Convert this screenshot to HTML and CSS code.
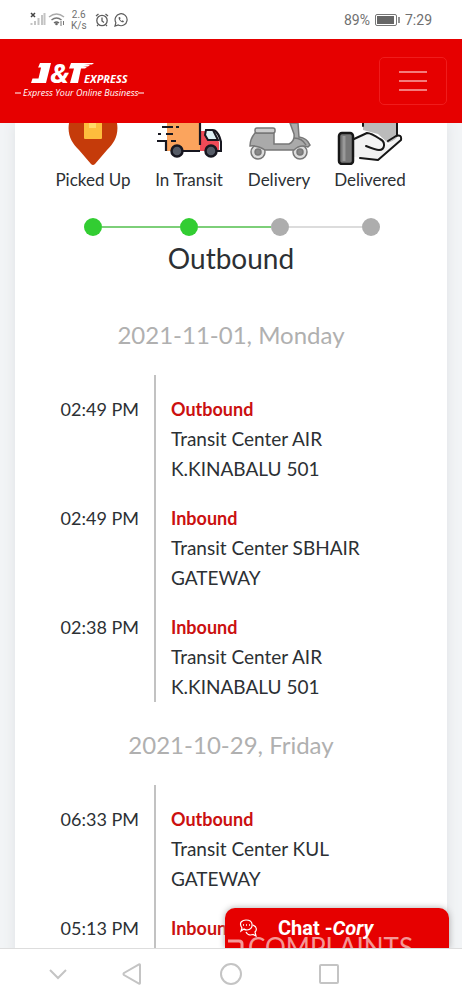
FILE: index.html
```html
<!DOCTYPE html>
<html lang="en">
<head>
<meta charset="utf-8">
<meta name="viewport" content="width=device-width, initial-scale=1">
<title>J&amp;T Express tracking</title>
<link rel="stylesheet" href="styles.css">
</head>
<body>
<div class="status-bar">
  <div class="status-left">
    <svg width="36" height="16" viewBox="0 0 36 16" aria-hidden="true">
      <path d="M1 1l4 4M5 1l-4 4" stroke="#444" stroke-width="1.5"/>
      <path d="M1.500 13v-2M5 13V9M8.500 13V6M12 13V3M14.500 13V1" stroke="#c4c4c4" stroke-width="2"/>
      <g fill="none" stroke="#aaa" stroke-width="1.500"><path d="M19 5q7.500-6 15 0"/><path d="M21.500 8q5-4 10 0" stroke="#777"/><path d="M24 11q2.500-2 5 0" stroke="#666"/></g>
      <circle cx="26.500" cy="12" r="1.300" fill="#666"/><path d="M31 9v5M33.500 9v4" stroke="#777"/>
    </svg>
    <span class="net-speed">2.6<br>K/s</span>
    <svg class="alarm" width="14" height="14" viewBox="0 0 14 14" fill="none" stroke="#5c5c5c" stroke-width="1.300" aria-hidden="true"><circle cx="7" cy="7.500" r="5.200"/><path d="M1 3l2.500-2M13 3l-2.500-2M7 4.500V8l2 1.500M3 12l-1 1M11 12l1 1"/></svg>
    <svg width="14" height="14" viewBox="0 0 14 14" fill="none" stroke="#5c5c5c" stroke-width="1.200" aria-hidden="true"><path d="M1 13l.9-3.300A6 6 0 1 1 4.300 12z"/><path d="M4.700 4.300c-.7 2 2.500 5.500 4.700 5l.6-1.100-1.500-.9-.8.700C6.500 7.400 6 6.500 6 6l.6-.6-.6-1.500z" fill="#5c5c5c" stroke="none"/></svg>
  </div>
  <div class="status-right">
    <span>89%</span>
    <svg width="25" height="12" viewBox="0 0 25 12" aria-hidden="true"><rect x=".5" y=".5" width="21" height="11" rx="1.500" fill="none" stroke="#777"/><rect x="2" y="2" width="17" height="8" fill="#666"/><path d="M24 3v6" stroke="#777" stroke-width="1.600"/></svg>
    <span>7:29</span>
  </div>
</div>

<header class="site-header">
  <a class="brand" href="#" aria-label="J&amp;T Express">
    <svg width="130" height="40" viewBox="0 0 130 40" aria-hidden="true">
      <g class="logo-text" fill="#fff">
        <path d="M25 2h11l-5 20H16l1.500-4.500h6l2.600-11h-3z"/>
        <text class="logo-amp" x="35" y="22">&amp;</text>
        <path d="M56 2h23l-2 1.500h-8l6 .5-2 1.500h-5l4 .5-2 1.500h-4L63 22h-8l4-14.500h-5z"/>
        <text class="logo-express" x="69" y="22">EXPRESS</text>
        <text class="logo-tag" x="8" y="35">Express Your Online Business</text>
      </g>
      <path d="M0 32h6M123 32h6" stroke="#fff"/>
    </svg>
  </a>
  <button class="menu-button" type="button" aria-label="Menu"><span></span><span></span><span></span></button>
</header>

<main class="viewport">
  <section class="card">
    <ol class="steps">
      <li><svg width="60" height="42" viewBox="0 0 60 42" aria-hidden="true"><path d="M6 0h48c2 12-3 20-10 27L32 41q-2 2-4 0L16 27C9 20 4 12 6 0z" fill="#c53b0a"/><path d="M21 0h18v15q0 1-1 1H22q-1 0-1-1z" fill="#fdbd3d"/><path d="M26 0h7v5h-7z" fill="#ffd968"/></svg>Picked Up</li>
      <li><svg width="66" height="42" viewBox="0 0 66 42" aria-hidden="true">
        <path d="M11 0h33v28H11z" fill="#fba45d"/><path d="M44 8h12l7 11v9H44z" fill="#f04a57"/><path d="M50 7h7l5 10H52l-3-5z" fill="#dff0f5" stroke="#171720" stroke-width="2"/>
        <path d="M44 0v22M26 28h18M58 7q5 3 7 12v9h-4M1 18h9v10M6 4h11M20 4h3M2 11h3M10 11h7M15 18h5" fill="none" stroke="#171720" stroke-width="2.200"/>
        <g fill="#555b66" stroke="#171720" stroke-width="2.500"><circle cx="21" cy="28" r="5.500"/><circle cx="55" cy="28" r="5.500"/></g></svg>In Transit</li>
      <li><svg width="64" height="42" viewBox="0 0 64 42" aria-hidden="true">
        <g stroke="#777" stroke-width="1.500"><g fill="#ddd"><circle cx="11" cy="29" r="7"/><circle cx="53" cy="29" r="7"/></g><g fill="#888"><circle cx="11" cy="29" r="3"/><circle cx="53" cy="29" r="3"/></g>
        <path d="M43 0h8l1 14q8 1 11 8l-2 2q-8-3-14 3H18q-7-5-15-4 0-7 5-13h19v11h15q6-3 5-10z" fill="#aaa"/><rect x="8" y="5" width="20" height="5" rx="2" fill="#ccc"/><path d="M47 15q8 0 12 7" fill="none"/></g></svg>Delivery</li>
      <li><svg width="66" height="42" viewBox="0 0 66 42" aria-hidden="true">
        <path d="M26 0h34v16l-9 4-10-9-15-4z" fill="#bbb"/><path d="M17 16l13-6 13 5 6 4 2 3 11-9q4 2 1 6L41 37l-24-3z" fill="#f2f2f2"/>
        <g fill="none" stroke="#171717" stroke-width="2" stroke-linecap="round" stroke-linejoin="round"><path d="M17 16l13-6q4 0 13 6c6 3 5 11-1 11q-3 0-13-4M51 18l8-5q6-2 5 4L41 37l-18-2M26 0v3M60 0v12"/><rect x="2" y="10" width="14" height="31" rx="3" fill="#777" stroke-width="2.500"/></g><path d="M7 13v25" stroke="#999" stroke-width="3"/></svg>Delivered</li>
    </ol>
    <div class="track" aria-hidden="true">
      <i class="dot done"></i><i class="line done first"></i><i class="dot done"></i><i class="line done"></i><i class="dot"></i><i class="line"></i><i class="dot"></i>
    </div>
    <h1>Outbound</h1>

    <h2>2021-11-01, Monday</h2>
    <ul class="events">
      <li><time>02:49 PM</time><div class="event"><strong>Outbound</strong><p>Transit Center AIR<br>K.KINABALU 501</p></div></li>
      <li><time>02:49 PM</time><div class="event"><strong>Inbound</strong><p>Transit Center SBHAIR<br>GATEWAY</p></div></li>
      <li><time>02:38 PM</time><div class="event"><strong>Inbound</strong><p>Transit Center AIR<br>K.KINABALU 501</p></div></li>
    </ul>
    <h2>2021-10-29, Friday</h2>
    <ul class="events ongoing">
      <li><time>06:33 PM</time><div class="event"><strong>Outbound</strong><p>Transit Center KUL<br>GATEWAY</p></div></li>
      <li><time>05:13 PM</time><div class="event"><strong>Inbound</strong></div></li>
    </ul>
  </section>
  <button class="chat" type="button">
    <svg width="18" height="18" viewBox="0 0 18 18" fill="none" stroke="#fff" stroke-width="1.200" aria-hidden="true"><path d="M2 12l1-3C-1 3 4 1 7 1c8 0 8 9 1 10q-2 0-3-1zM14 6c4 2 4 5 2 7l1 4-3-1.500c-3 1-6 0-7-2.500"/><path d="M4 6h1M7 6h1M10 6h1" stroke-width="1.500"/></svg>
    <span>Chat -<em>Cory</em></span>
  </button>
  <div class="watermark"><svg width="16" height="20" viewBox="0 0 16 20" fill="none" stroke="currentColor" stroke-width="3" aria-hidden="true"><path d="M0 4h11q3 0 3 3v13"/></svg><span>COMPLAINTS</span></div>
</main>

<nav class="nav-bar" aria-label="System">
  <button type="button" aria-label="Hide"><svg width="18" height="12" viewBox="0 0 18 12"><path d="M1 2l8 8 8-8"/></svg></button>
  <button type="button" aria-label="Back"><svg width="20" height="22" viewBox="0 0 20 22"><path d="M18 2v18q0 1-1 .5L2 12q-1-1 0-2l15-8.500q1-.5 1 .5z"/></svg></button>
  <button type="button" aria-label="Home"><svg width="22" height="22" viewBox="0 0 22 22"><circle cx="11" cy="11" r="10"/></svg></button>
  <button type="button" aria-label="Recents"><svg width="20" height="20" viewBox="0 0 20 20"><rect x="1" y="1" width="18" height="18" rx="1"/></svg></button>
</nav>
</body>
</html>
```
FILE: styles.css
```css
* { box-sizing: border-box; }
body {
  margin: 0;
  height: 100vh;
  display: flex;
  flex-direction: column;
  overflow: hidden;
  background: #fff;
  color: #2c3034;
  font-family: Lato, "Noto Sans", sans-serif;
}
button { border: 0; background: none; padding: 0; font: inherit; }
ol, ul { list-style: none; margin: 0; padding: 0; }
h1, h2, p { margin: 0; font-weight: 400; }
svg { display: block; }

.status-bar {
  flex: none;
  height: 39px;
  display: flex;
  align-items: center;
  justify-content: space-between;
  padding: 0 30px;
  color: #707070;
  font: 14px Roboto, sans-serif;
}
.status-left, .status-right { display: flex; align-items: center; gap: 5px; }
.net-speed { font-size: 10px; line-height: 11px; text-align: center; }
.alarm { margin-left: 3px; }

.site-header {
  flex: none;
  height: 84px;
  display: flex;
  align-items: center;
  justify-content: space-between;
  padding: 0 15px;
  background: #e60000;
}
.logo-text { font-family: "Open Sans", sans-serif; font-style: italic; font-weight: 700; }
.logo-amp { font-size: 27px; }
.logo-express { font-size: 11px; }
.logo-tag { font-size: 9px; font-weight: 500; }
.menu-button {
  width: 68px;
  height: 48px;
  display: flex;
  flex-direction: column;
  align-items: center;
  justify-content: center;
  gap: 7px;
  border: 1px solid #f01c1c;
  border-radius: 5px;
}
.menu-button span { width: 28px; height: 2px; background: #f47c7c; }

.viewport {
  position: relative;
  flex: 1;
  min-height: 0;
  overflow: hidden;
  padding: 0 15px;
  background: #f2f4f6;
}
.card { background: #fff; min-height: 100%; box-shadow: 0 0 12px #dfe2e5; }
.steps {
  display: grid;
  grid-template-columns: 96fr 96fr 84fr 98fr;
  padding: 0 28px 0 30px;
  font-size: 17px;
  line-height: 30px;
}
.steps li { display: flex; flex-direction: column; align-items: center; white-space: nowrap; }
.track { display: flex; align-items: center; padding: 23px 67px 0 69px; }
.dot { flex: none; width: 18px; height: 18px; border-radius: 50%; background: #adadad; }
.line { flex: 73; height: 2px; background: #dcdcdc; }
.line.first { flex: 78; }
.dot.done { background: #32cd32; }
.line.done { background: #7dcf79; }
h1 { padding: 5px 0 17px; font-size: 28px; line-height: 34px; text-align: center; }
h2 { padding: 28px 0 25px; color: #b0b0b0; font-size: 24px; line-height: 30px; text-align: center; }
.events { font-size: 19px; line-height: 30px; }
.events li { display: grid; grid-template-columns: 124px 1fr; column-gap: 15px; }
time { padding-top: 19px; font-size: 18px; text-align: right; white-space: nowrap; }
.event { padding: 19px 0 0 15px; border-left: 2px solid #c2c2c2; }
.event strong { color: #cb1010; font-size: 18px; }
.ongoing li:last-child .event { padding-bottom: 20px; }

.chat {
  position: absolute;
  right: 13px;
  bottom: 0;
  width: 224px;
  height: 40px;
  display: flex;
  align-items: center;
  gap: 21px;
  padding-left: 14px;
  border-radius: 10px 10px 0 0;
  background: #e60000;
  box-shadow: 0 0 6px #aaa;
  color: #fff;
  font: 700 20px Roboto, sans-serif;
}
.watermark {
  position: absolute;
  right: 49px;
  bottom: -14px;
  display: flex;
  align-items: center;
  gap: 4px;
  color: rgba(255, 255, 255, 0.6);
  font-size: 26px;
  line-height: 30px;
  pointer-events: none;
}

.nav-bar {
  flex: none;
  height: 52px;
  display: grid;
  grid-template-columns: 76fr 72fr 126fr 70fr;
  padding: 0 98px 2px 20px;
  border-top: 1px solid #ddd;
}
.nav-bar button { display: flex; align-items: center; justify-content: center; }
.nav-bar path, .nav-bar circle, .nav-bar rect { fill: none; stroke: #c4c4c4; stroke-width: 2; }
```
